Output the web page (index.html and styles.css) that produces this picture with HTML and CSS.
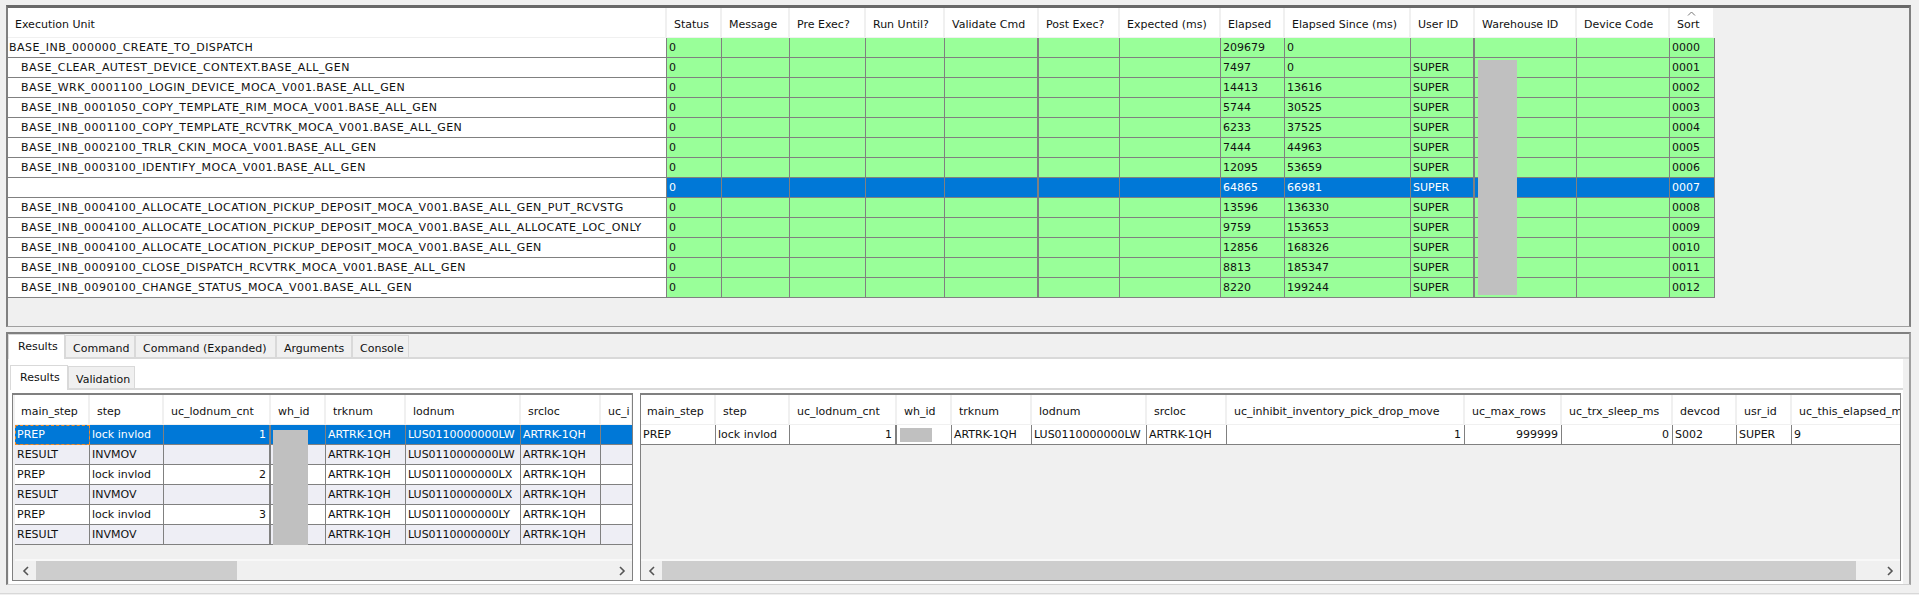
FILE: index.html
```html
<!DOCTYPE html>
<html lang="en">
<head>
    <meta charset="UTF-8">
    <title>Test Execution Results</title>
    <link rel="stylesheet" href="styles.css">
</head>
<body>
    <div class="top_pane">
        <table class="grid run_grid">
            <colgroup>
                <col class="w659"><col class="w55"><col class="w68"><col class="w76"><col class="w79"><col class="w94"><col class="w81"><col class="w101"><col class="w64"><col class="w126"><col class="w64"><col class="w102"><col class="w93"><col class="w45">
            </colgroup>
            <thead>
                <tr>
                    <th>Execution Unit</th><th>Status</th><th>Message</th><th>Pre Exec?</th><th>Run Until?</th><th>Validate Cmd</th><th>Post Exec?</th><th>Expected (ms)</th><th>Elapsed</th><th>Elapsed Since (ms)</th><th>User ID</th><th>Warehouse ID</th><th>Device Code</th>
                    <th class="sorted">Sort<svg class="sort_arrow" width="9" height="5" viewBox="0 0 9 5"><path d="M1 4.5 4.5 1 8 4.5" fill="none" stroke="#777"/></svg></th>
                </tr>
            </thead>
            <tbody>
                <tr><td class="unit root">BASE_INB_000000_CREATE_TO_DISPATCH</td><td>0</td><td></td><td></td><td></td><td></td><td></td><td></td><td>209679</td><td>0</td><td></td><td></td><td></td><td>0000</td></tr>
                <tr><td class="unit">BASE_CLEAR_AUTEST_DEVICE_CONTEXT.BASE_ALL_GEN</td><td>0</td><td></td><td></td><td></td><td></td><td></td><td></td><td>7497</td><td>0</td><td>SUPER</td><td></td><td></td><td>0001</td></tr>
                <tr><td class="unit">BASE_WRK_0001100_LOGIN_DEVICE_MOCA_V001.BASE_ALL_GEN</td><td>0</td><td></td><td></td><td></td><td></td><td></td><td></td><td>14413</td><td>13616</td><td>SUPER</td><td></td><td></td><td>0002</td></tr>
                <tr><td class="unit">BASE_INB_0001050_COPY_TEMPLATE_RIM_MOCA_V001.BASE_ALL_GEN</td><td>0</td><td></td><td></td><td></td><td></td><td></td><td></td><td>5744</td><td>30525</td><td>SUPER</td><td></td><td></td><td>0003</td></tr>
                <tr><td class="unit">BASE_INB_0001100_COPY_TEMPLATE_RCVTRK_MOCA_V001.BASE_ALL_GEN</td><td>0</td><td></td><td></td><td></td><td></td><td></td><td></td><td>6233</td><td>37525</td><td>SUPER</td><td></td><td></td><td>0004</td></tr>
                <tr><td class="unit">BASE_INB_0002100_TRLR_CKIN_MOCA_V001.BASE_ALL_GEN</td><td>0</td><td></td><td></td><td></td><td></td><td></td><td></td><td>7444</td><td>44963</td><td>SUPER</td><td></td><td></td><td>0005</td></tr>
                <tr><td class="unit">BASE_INB_0003100_IDENTIFY_MOCA_V001.BASE_ALL_GEN</td><td>0</td><td></td><td></td><td></td><td></td><td></td><td></td><td>12095</td><td>53659</td><td>SUPER</td><td></td><td></td><td>0006</td></tr>
                <tr class="selected"><td class="unit"></td><td>0</td><td></td><td></td><td></td><td></td><td></td><td></td><td>64865</td><td>66981</td><td>SUPER</td><td></td><td></td><td>0007</td></tr>
                <tr><td class="unit">BASE_INB_0004100_ALLOCATE_LOCATION_PICKUP_DEPOSIT_MOCA_V001.BASE_ALL_GEN_PUT_RCVSTG</td><td>0</td><td></td><td></td><td></td><td></td><td></td><td></td><td>13596</td><td>136330</td><td>SUPER</td><td></td><td></td><td>0008</td></tr>
                <tr><td class="unit">BASE_INB_0004100_ALLOCATE_LOCATION_PICKUP_DEPOSIT_MOCA_V001.BASE_ALL_ALLOCATE_LOC_ONLY</td><td>0</td><td></td><td></td><td></td><td></td><td></td><td></td><td>9759</td><td>153653</td><td>SUPER</td><td></td><td></td><td>0009</td></tr>
                <tr><td class="unit">BASE_INB_0004100_ALLOCATE_LOCATION_PICKUP_DEPOSIT_MOCA_V001.BASE_ALL_GEN</td><td>0</td><td></td><td></td><td></td><td></td><td></td><td></td><td>12856</td><td>168326</td><td>SUPER</td><td></td><td></td><td>0010</td></tr>
                <tr><td class="unit">BASE_INB_0009100_CLOSE_DISPATCH_RCVTRK_MOCA_V001.BASE_ALL_GEN</td><td>0</td><td></td><td></td><td></td><td></td><td></td><td></td><td>8813</td><td>185347</td><td>SUPER</td><td></td><td></td><td>0011</td></tr>
                <tr><td class="unit">BASE_INB_0090100_CHANGE_STATUS_MOCA_V001.BASE_ALL_GEN</td><td>0</td><td></td><td></td><td></td><td></td><td></td><td></td><td>8220</td><td>199244</td><td>SUPER</td><td></td><td></td><td>0012</td></tr>
            </tbody>
        </table>
        <div class="redact redact_run"></div>
    </div>

    <div class="bottom_pane">
        <div class="tabs">
            <div class="tab active">Results</div>
            <div class="tab w70">Command</div>
            <div class="tab w141">Command (Expanded)</div>
            <div class="tab w76">Arguments</div>
            <div class="tab w57">Console</div>
        </div>
        <div class="tab_body">
            <div class="tabs sub_tabs">
                <div class="tab active">Results</div>
                <div class="tab w67">Validation</div>
            </div>
            <div class="split">
                <div class="grid_box left_box">
                    <div class="grid_scroll">
                        <table class="grid step_grid">
                            <colgroup>
                                <col class="w75"><col class="w74"><col class="w107"><col class="w55"><col class="w80"><col class="w115"><col class="w80"><col class="w32">
                            </colgroup>
                            <thead>
                                <tr><th>main_step</th><th>step</th><th>uc_lodnum_cnt</th><th>wh_id</th><th>trknum</th><th>lodnum</th><th>srcloc</th><th>uc_i</th></tr>
                            </thead>
                            <tbody>
                                <tr class="selected"><td class="focused">PREP</td><td>lock invlod</td><td class="num">1</td><td></td><td>ARTRK-1QH</td><td>LUS0110000000LW</td><td>ARTRK-1QH</td><td></td></tr>
                                <tr class="alt"><td>RESULT</td><td>INVMOV</td><td class="num"></td><td></td><td>ARTRK-1QH</td><td>LUS0110000000LW</td><td>ARTRK-1QH</td><td></td></tr>
                                <tr><td>PREP</td><td>lock invlod</td><td class="num">2</td><td></td><td>ARTRK-1QH</td><td>LUS0110000000LX</td><td>ARTRK-1QH</td><td></td></tr>
                                <tr class="alt"><td>RESULT</td><td>INVMOV</td><td class="num"></td><td></td><td>ARTRK-1QH</td><td>LUS0110000000LX</td><td>ARTRK-1QH</td><td></td></tr>
                                <tr><td>PREP</td><td>lock invlod</td><td class="num">3</td><td></td><td>ARTRK-1QH</td><td>LUS0110000000LY</td><td>ARTRK-1QH</td><td></td></tr>
                                <tr class="alt"><td>RESULT</td><td>INVMOV</td><td class="num"></td><td></td><td>ARTRK-1QH</td><td>LUS0110000000LY</td><td>ARTRK-1QH</td><td></td></tr>
                            </tbody>
                        </table>
                        <div class="redact redact_left"></div>
                    </div>
                    <div class="hscroll">
                        <span class="arrow"><svg width="8" height="10" viewBox="0 0 8 10"><path d="M6 1 2 5l4 4" fill="none" stroke="#555" stroke-width="1.6"/></svg></span>
                        <div class="thumb thumb_left"></div>
                        <span class="arrow end"><svg width="8" height="10" viewBox="0 0 8 10"><path d="M2 1l4 4-4 4" fill="none" stroke="#555" stroke-width="1.6"/></svg></span>
                    </div>
                </div>
                <div class="grid_box right_box">
                    <div class="grid_scroll">
                        <table class="grid step_grid">
                            <colgroup>
                                <col class="w75"><col class="w74"><col class="w107"><col class="w55"><col class="w80"><col class="w115"><col class="w80"><col class="w238"><col class="w97"><col class="w111"><col class="w64"><col class="w55"><col class="w120">
                            </colgroup>
                            <thead>
                                <tr><th>main_step</th><th>step</th><th>uc_lodnum_cnt</th><th>wh_id</th><th>trknum</th><th>lodnum</th><th>srcloc</th><th>uc_inhibit_inventory_pick_drop_move</th><th>uc_max_rows</th><th>uc_trx_sleep_ms</th><th>devcod</th><th>usr_id</th><th>uc_this_elapsed_ms</th></tr>
                            </thead>
                            <tbody>
                                <tr><td>PREP</td><td>lock invlod</td><td class="num">1</td><td></td><td>ARTRK-1QH</td><td>LUS0110000000LW</td><td>ARTRK-1QH</td><td class="num">1</td><td class="num">999999</td><td class="num">0</td><td>S002</td><td>SUPER</td><td>9</td></tr>
                            </tbody>
                        </table>
                        <div class="redact redact_right"></div>
                    </div>
                    <div class="hscroll">
                        <span class="arrow"><svg width="8" height="10" viewBox="0 0 8 10"><path d="M6 1 2 5l4 4" fill="none" stroke="#555" stroke-width="1.6"/></svg></span>
                        <div class="thumb thumb_right"></div>
                        <span class="arrow end"><svg width="8" height="10" viewBox="0 0 8 10"><path d="M2 1l4 4-4 4" fill="none" stroke="#555" stroke-width="1.6"/></svg></span>
                    </div>
                </div>
            </div>
        </div>
    </div>
    <div class="foot_strip"></div>
</body>
</html>
```

FILE: styles.css
```css
body, html, * {
    box-sizing: border-box;
    margin: 0;
    padding: 0;
}
html, body {
    height: 595px;
    overflow: hidden;
}
body {
    font-family: "DejaVu Sans", sans-serif;
    font-size: 11px;
    background-color: #f0f0f0;
    color: #111;
    padding: 5px 8px 0 6px;
}

/* top pane */
.top_pane {
    position: relative;
    height: 322px;
    border: 2px solid #808080;
    border-top: 3px solid #696969;
    border-bottom: 1px solid #a0a0a0;
}
.grid {
    border-collapse: separate;
    border-spacing: 0;
    table-layout: fixed;
    width: max-content;
}
.grid th {
    font-weight: normal;
    text-align: left;
    background-color: #fff;
    border-right: 2px solid #f0f0f0;
    border-bottom: 1px solid #f0f0f0;
    padding: 3px 0 0 7px;
    white-space: nowrap;
    overflow: hidden;
}
.grid td {
    height: 20px;
    border-right: 1px solid #808080;
    border-bottom: 1px solid #808080;
    padding: 0 0 0 2px;
    white-space: nowrap;
    overflow: hidden;
}
.run_grid th {
    height: 30px;
}
.run_grid td {
    background-color: #99ff99;
}
.run_grid td.unit {
    background-color: #fff;
    padding-left: 13px;
    letter-spacing: 0.45px;
}
.run_grid td.root {
    padding-left: 1px;
}
/* these two column rules come out heavier in the real grid */
.run_grid td:nth-child(6), .run_grid td:nth-child(11) {
    border-right-width: 2px;
}
.run_grid tr.selected td {
    background-color: #0078d7;
    color: #fff;
}
.run_grid tr.selected td.unit {
    background-color: #fff;
}
.sorted {
    position: relative;
}
.sort_arrow {
    position: absolute;
    top: 3px;
    left: 17px;
}
.redact {
    position: absolute;
    background-color: #c0c0c0;
}
.redact_run {
    left: 1470px;
    top: 52px;
    width: 39px;
    height: 235px;
}

/* column widths */
.w659 { width: 659px; }
.w55 { width: 55px; }
.w68 { width: 68px; }
.w76 { width: 76px; }
.w79 { width: 79px; }
.w94 { width: 94px; }
.w81 { width: 81px; }
.w101 { width: 101px; }
.w64 { width: 64px; }
.w126 { width: 126px; }
.w102 { width: 102px; }
.w93 { width: 93px; }
.w45 { width: 45px; }
.w75 { width: 75px; }
.w74 { width: 74px; }
.w107 { width: 107px; }
.w80 { width: 80px; }
.w115 { width: 115px; }
.w32 { width: 32px; }
.w238 { width: 238px; }
.w97 { width: 97px; }
.w111 { width: 111px; }
.w120 { width: 120px; }

/* bottom pane */
.bottom_pane {
    margin-top: 5px;
    height: 253px;
    border-top: 2px solid #808080;
    border-left: 2px solid #808080;
    border-right: 2px solid #a0a0a0;
    border-bottom: 1px solid #d0d0d0;
}
.tabs {
    display: flex;
    align-items: flex-end;
    height: 25px;
    padding-top: 1px;
    border-bottom: 2px solid #d9d9d9;
    background-color: #f0f0f0;
}
.tab {
    height: 22px;
    padding: 6px 0 0 7px;
    background-color: #f0f0f0;
    border: 1px solid #d9d9d9;
    border-bottom: none;
}
.tab.active {
    width: 57px;
    height: 25px;
    background-color: #fff;
    margin-bottom: -2px;
    padding: 5px 0 0 9px;
    z-index: 1;
}
.tab.w70 { width: 70px; }
.tab.w141 { width: 141px; }
.tab.w76 { width: 76px; }
.tab.w57 { width: 57px; }
.tab.w67 { width: 67px; }
.tab_body {
    height: 225px;
    background-color: #fff;
    margin-left: 1px;
    margin-right: 6px;
    padding: 6px 0 0 1px;
}
.sub_tabs {
    height: 25px;
    background-color: #fff;
    padding-top: 0;
}
.sub_tabs .tab.active {
    width: 58px;
}
.split {
    display: flex;
    margin-top: 3px;
    margin-left: 2px;
    height: 188px;
}
.grid_box {
    display: flex;
    flex-direction: column;
    border: 1px solid #808080;
    border-top-width: 2px;
    background-color: #f0f0f0;
    overflow: hidden;
}
.left_box {
    width: 621px;
    padding-left: 2px;
}
.right_box {
    width: 1261px;
    margin-left: 7px;
}
.grid_scroll {
    position: relative;
    flex: 1;
    overflow: hidden;
}
.step_grid th {
    height: 30px;
}
.step_grid th:first-child {
    padding-left: 6px;
}
.step_grid td {
    background-color: #fff;
}
.step_grid td:nth-child(3) {
    border-right-width: 2px;
}
.step_grid tr.alt td {
    background-color: #eeeef5;
}
.step_grid tr.selected td {
    background-color: #0078d7;
    color: #fff;
}
.step_grid td.num {
    text-align: right;
    padding-right: 3px;
}
.step_grid td.focused {
    outline: 1px dashed #f08c28;
    outline-offset: -1px;
}
.redact_left {
    left: 258px;
    top: 35px;
    width: 35px;
    height: 115px;
}
.redact_right {
    left: 259px;
    top: 33px;
    width: 32px;
    height: 14px;
}
.hscroll {
    display: flex;
    align-items: stretch;
    flex: none;
    height: 21px;
    border-top: 2px solid #f8f8f8;
    background-color: #f0f0f0;
}
.arrow {
    display: flex;
    align-items: center;
    justify-content: center;
    width: 21px;
    flex: none;
}
.arrow.end {
    margin-left: auto;
}
.thumb {
    background-color: #cdcdcd;
}
.thumb_left {
    width: 201px;
}
.thumb_right {
    width: 1194px;
}
.foot_strip {
    height: 9px;
    margin-left: -6px;
    margin-right: -8px;
    border-bottom: 1px solid #d8d8d8;
}
```
